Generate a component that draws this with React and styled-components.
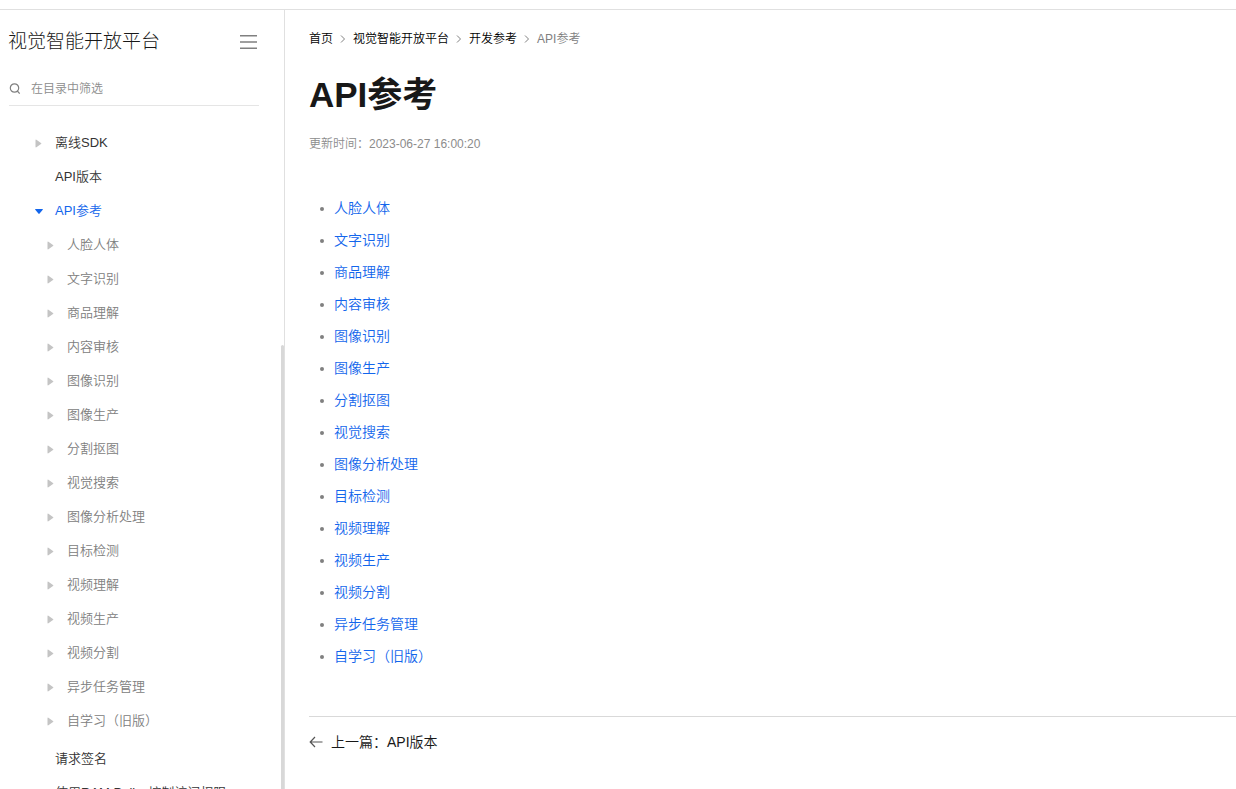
import React, { useState } from 'react';
import styled, { createGlobalStyle } from 'styled-components';

const GlobalStyle = createGlobalStyle`
  *, *::before, *::after { box-sizing: border-box; }
  body {
    margin: 0;
    background: #fff;
    color: #181818;
    font-family: "Liberation Sans", "Noto Sans CJK SC", sans-serif;
    font-size: 14px;
    font-weight: 350;
  }
  a { color: inherit; text-decoration: none; }
  ul, ol { list-style: none; margin: 0; padding: 0; }
  button { padding: 0; border: 0; background: none; cursor: pointer; }
`;

const Shell = styled.div`
  display: flex;
  flex-direction: column;
  height: 100vh;
`;

const TopBar = styled.header`
  flex: none;
  height: 10px;
  border-bottom: 1px solid #e0e0e0;
`;

const Columns = styled.div`
  flex: 1;
  min-height: 0;
  display: flex;
`;

const Sidebar = styled.aside`
  position: relative;
  flex: none;
  width: 285px;
  display: flex;
  flex-direction: column;
  border-right: 1px solid #e0e0e0;
`;

const ScrollThumb = styled.span`
  position: absolute;
  top: 43%;
  right: 0;
  bottom: 0;
  width: 3px;
  border-radius: 3px 3px 0 0;
  background: #d8d8d8;
`;

const SidebarHead = styled.div`
  display: flex;
  align-items: center;
  justify-content: space-between;
  padding: 17px 27px 0 8px;
`;

const ProductName = styled.h2`
  margin: 0;
  font-size: 19px;
  line-height: 30px;
  font-weight: 300;
`;

const MenuButton = styled.button`
  display: flex;
  color: #808080;
`;

const SearchBox = styled.label`
  display: flex;
  align-items: center;
  gap: 10px;
  height: 34px;
  margin: 15px 25px 0 9px;
  border-bottom: 1px solid #e5e5e5;
  color: #808080;
`;

const SearchInput = styled.input`
  flex: 1;
  min-width: 0;
  padding: 0;
  border: 0;
  outline: 0;
  background: none;
  font: inherit;
  font-size: 12px;
  line-height: 20px;
  color: #181818;
  &::placeholder { color: #8c8c8c; opacity: 1; }
`;

const Tree = styled.nav`
  flex: 1;
  min-height: 0;
  margin-top: 20px;
  overflow-y: auto;
  scrollbar-width: none;
`;

const SubTree = styled.ul`
  padding-bottom: 4px;
`;

const TreeRow = styled.div`
  display: flex;
  align-items: center;
  height: 34px;
  padding-left: ${(p) => (p.$nested ? 46 : 34)}px;
  font-size: 13px;
  line-height: 20px;
  white-space: nowrap;
  color: ${(p) => (p.$active ? '#1366ec' : p.$nested ? '#808080' : '#333')};
`;

const Toggle = styled.button`
  display: flex;
  align-items: center;
  width: 21px;
  height: 20px;
  color: ${(p) => (p.$open ? '#1366ec' : '#c4c4c4')};
`;

const ToggleSpace = styled.span`
  width: 21px;
`;

const Main = styled.main`
  flex: 1;
  min-width: 0;
  padding: 19px 0 24px 24px;
  overflow: hidden;
`;

const Crumbs = styled.ol`
  display: flex;
  align-items: center;
  font-size: 12px;
  line-height: 20px;
  color: #000;
`;

const Crumb = styled.li`
  display: flex;
  align-items: center;
  color: ${(p) => (p.$current ? '#808080' : '#000')};
  svg { margin: 0 7px; color: #808080; }
`;

const Title = styled.h1`
  margin: 22px 0 0;
  font-size: 35px;
  line-height: 48px;
  font-weight: 700;
`;

const Updated = styled.p`
  margin: 15px 0 0;
  font-size: 12px;
  line-height: 20px;
  color: #8c8c8c;
`;

const TopicList = styled.ul`
  padding: 38px 0 44px 11px;
`;

const Topic = styled.li`
  display: flex;
  align-items: center;
  gap: 10px;
  height: 32px;
  line-height: 24px;
  color: #1366ec;
  &::before {
    content: "";
    width: 4px;
    height: 4px;
    margin-top: 2px;
    border-radius: 50%;
    background: #808080;
  }
`;

const Pager = styled.footer`
  border-top: 1px solid #d9d9d9;
  padding-top: 13px;
`;

const PagerLink = styled.a`
  display: inline-flex;
  align-items: center;
  gap: 8px;
  line-height: 24px;
  svg { color: #555; }
`;

const topics = [
  '人脸人体', '文字识别', '商品理解', '内容审核', '图像识别',
  '图像生产', '分割抠图', '视觉搜索', '图像分析处理', '目标检测',
  '视频理解', '视频生产', '视频分割', '异步任务管理', '自学习（旧版）',
];

const tree = [
  { label: '离线SDK', expandable: true },
  { label: 'API版本' },
  { label: 'API参考', expandable: true, active: true, children: topics },
  { label: '请求签名' },
  { label: '使用RAM Policy控制访问权限' },
];

function Triangle({ open }) {
  return (
    <svg width="9" height="10" viewBox="0 0 9 10" fill="currentColor" aria-hidden="true">
      <path
        d={open ? 'M1.6 3h6.8q.9 0 .3.8L5.6 7.600q-.6.7-1.2 0L1.3 3.800q-.6-.8.3-.8Z' : 'M1.500 2.200q0-.9.9-.5l4.600 3.200q.9.600 0 1.200l-4.600 3.200q-.9.400-.9-.5Z'}
      />
    </svg>
  );
}

function Item({ label, expandable, active, nested, open, onToggle }) {
  return (
    <TreeRow $nested={nested} $active={active}>
      {expandable ? (
        <Toggle type="button" aria-label={label} aria-expanded={!!open} $open={open} onClick={onToggle}>
          <Triangle open={open} />
        </Toggle>
      ) : (
        <ToggleSpace />
      )}
      <a href="#doc">{label}</a>
    </TreeRow>
  );
}

function Chevron() {
  return (
    <svg width="6" height="8" viewBox="0 0 6 8" fill="none" stroke="currentColor" aria-hidden="true">
      <path d="M1 .5 4.500 4 1 7.500" />
    </svg>
  );
}

export default function App() {
  const [open, setOpen] = useState(true);
  return (
    <Shell>
      <GlobalStyle />
      <TopBar />
      <Columns>
        <Sidebar>
          <SidebarHead>
            <ProductName>视觉智能开放平台</ProductName>
            <MenuButton type="button" aria-label="目录">
              <svg width="17" height="14" viewBox="0 0 17 14" stroke="currentColor" aria-hidden="true">
                <path d="M0 .7h17M0 7h17M0 13.300h17" strokeWidth="1.400" />
              </svg>
            </MenuButton>
          </SidebarHead>
          <SearchBox>
            <svg width="12" height="12" viewBox="0 0 12 12" fill="none" stroke="currentColor" strokeWidth="1.200" aria-hidden="true">
              <circle cx="5.500" cy="5" r="4.200" />
              <path d="m8.300 8 2.400 2.700" />
            </svg>
            <SearchInput type="text" placeholder="在目录中筛选" aria-label="在目录中筛选" />
          </SearchBox>
          <Tree>
            <ul>
              {tree.map((item) => (
                <li key={item.label}>
                  <Item
                    label={item.label}
                    expandable={item.expandable}
                    active={item.active}
                    open={item.children && open}
                    onToggle={() => item.children && setOpen(!open)}
                  />
                  {item.children && open && (
                    <SubTree>
                      {item.children.map((child) => (
                        <li key={child}><Item label={child} expandable nested /></li>
                      ))}
                    </SubTree>
                  )}
                </li>
              ))}
            </ul>
          </Tree>
          <ScrollThumb />
        </Sidebar>
        <Main>
          <nav>
            <Crumbs>
              {['首页', '视觉智能开放平台', '开发参考'].map((name) => (
                <Crumb key={name}><a href="#crumb">{name}</a><Chevron /></Crumb>
              ))}
              <Crumb $current>API参考</Crumb>
            </Crumbs>
          </nav>
          <Title>API参考</Title>
          <Updated>更新时间：2023-06-27 16:00:20</Updated>
          <TopicList>
            {topics.map((name) => (
              <Topic key={name}><a href="#topic">{name}</a></Topic>
            ))}
          </TopicList>
          <Pager>
            <PagerLink href="#prev">
              <svg width="14" height="12" viewBox="0 0 14 12" fill="none" stroke="currentColor" strokeWidth="1.200" aria-hidden="true">
                <path d="M13.500 6H1.500M6 1 1.200 6 6 11" />
              </svg>
              <span>上一篇：API版本</span>
            </PagerLink>
          </Pager>
        </Main>
      </Columns>
    </Shell>
  );
}
